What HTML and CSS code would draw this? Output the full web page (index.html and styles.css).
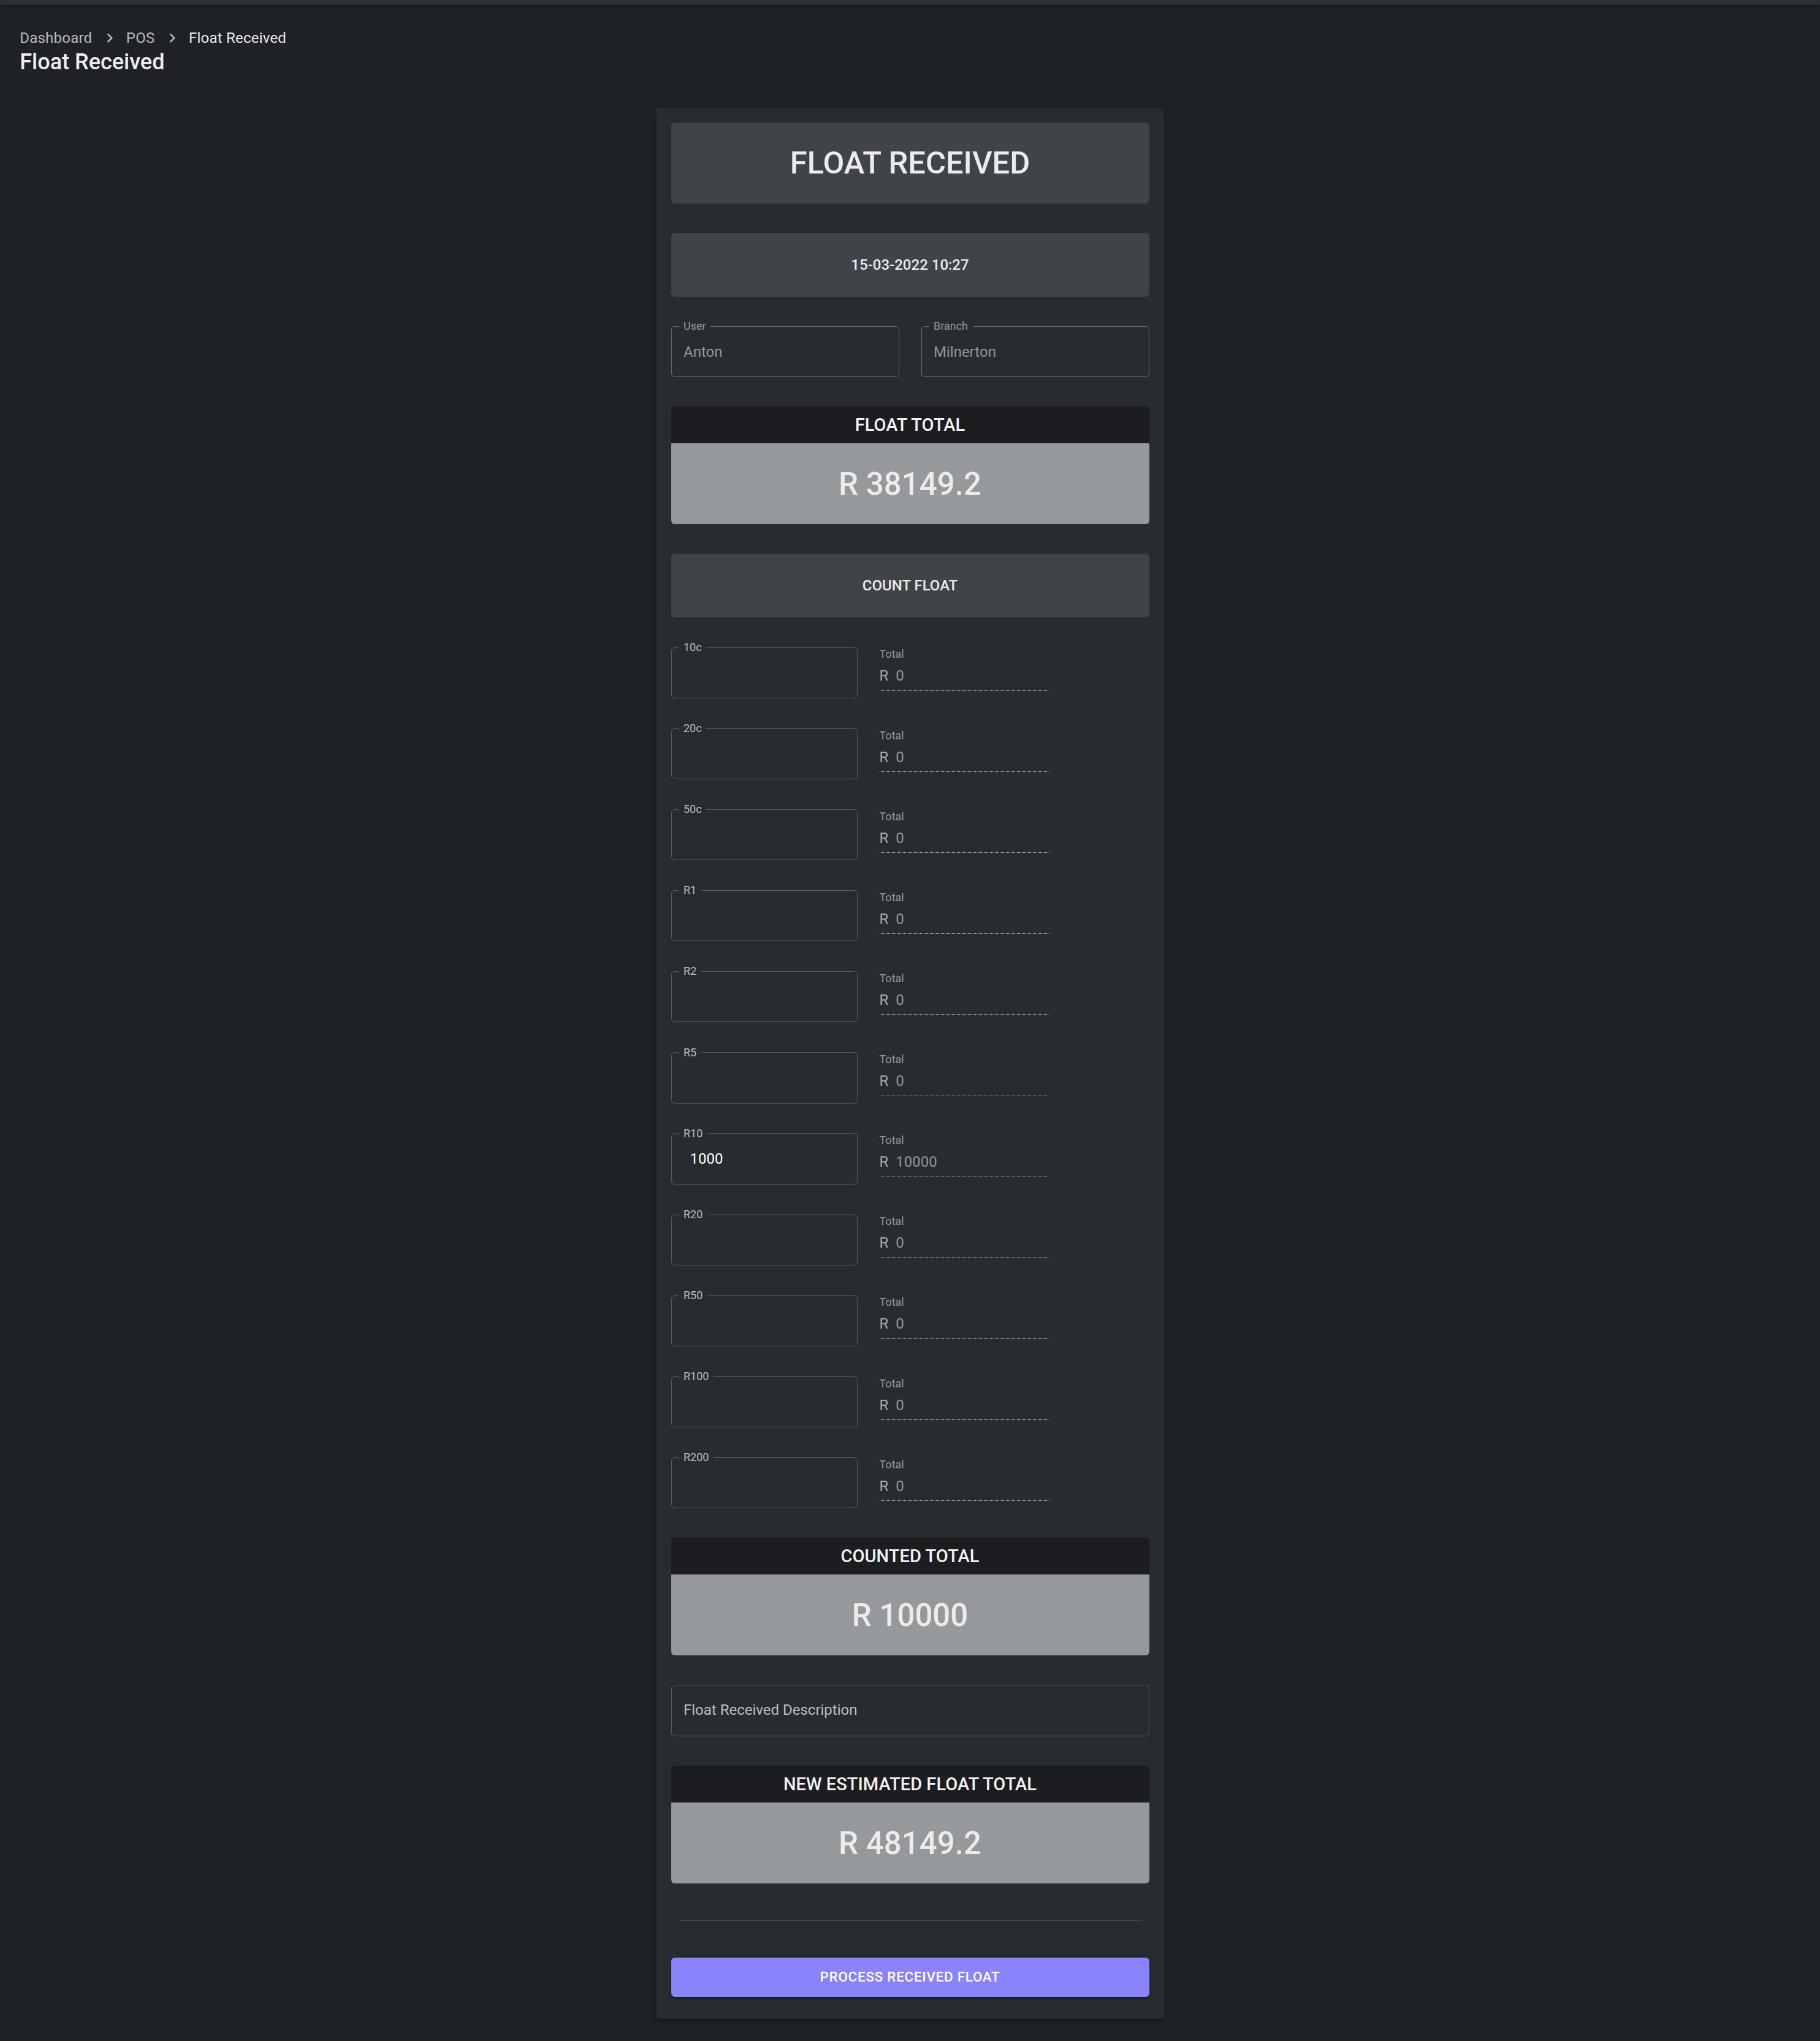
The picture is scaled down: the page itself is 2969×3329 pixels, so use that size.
FILE: index.html
```html
<!DOCTYPE html>
<html lang="en">
<head>
<meta charset="utf-8">
<title>Float Received</title>
<link rel="stylesheet" href="styles.css">
</head>
<body>
<div class="topbar"></div>
<header class="page-head">
  <nav class="crumbs">
    <span class="crumb">Dashboard</span>
    <svg class="sep" viewBox="0 0 24 24"><path d="M10 6 8.59 7.41 13.17 12l-4.58 4.59L10 18l6-6z"/></svg>
    <span class="crumb">POS</span>
    <svg class="sep" viewBox="0 0 24 24"><path d="M10 6 8.59 7.41 13.17 12l-4.58 4.59L10 18l6-6z"/></svg>
    <span class="crumb current">Float Received</span>
  </nav>
  <h1 class="page-title">Float Received</h1>
</header>

<main class="card">
  <div class="banner banner-title">FLOAT RECEIVED</div>
  <div class="banner banner-small">15-03-2022 10:27</div>

  <div class="pair">
    <fieldset class="outlined disabled"><legend>User</legend><div class="value">Anton</div></fieldset>
    <fieldset class="outlined disabled"><legend>Branch</legend><div class="value">Milnerton</div></fieldset>
  </div>

  <section class="total-box">
    <div class="total-head">FLOAT TOTAL</div>
    <div class="total-value">R 38149.2</div>
  </section>

  <div class="banner banner-small">COUNT FLOAT</div>

  <div class="denoms">
    <div class="denom">
      <fieldset class="outlined"><legend>10c</legend><div class="value num"></div></fieldset>
      <div class="std"><div class="std-label">Total</div><div class="std-input"><span class="adorn">R</span><span class="std-val">0</span></div></div>
    </div>
    <div class="denom">
      <fieldset class="outlined"><legend>20c</legend><div class="value num"></div></fieldset>
      <div class="std"><div class="std-label">Total</div><div class="std-input"><span class="adorn">R</span><span class="std-val">0</span></div></div>
    </div>
    <div class="denom">
      <fieldset class="outlined"><legend>50c</legend><div class="value num"></div></fieldset>
      <div class="std"><div class="std-label">Total</div><div class="std-input"><span class="adorn">R</span><span class="std-val">0</span></div></div>
    </div>
    <div class="denom">
      <fieldset class="outlined"><legend>R1</legend><div class="value num"></div></fieldset>
      <div class="std"><div class="std-label">Total</div><div class="std-input"><span class="adorn">R</span><span class="std-val">0</span></div></div>
    </div>
    <div class="denom">
      <fieldset class="outlined"><legend>R2</legend><div class="value num"></div></fieldset>
      <div class="std"><div class="std-label">Total</div><div class="std-input"><span class="adorn">R</span><span class="std-val">0</span></div></div>
    </div>
    <div class="denom">
      <fieldset class="outlined"><legend>R5</legend><div class="value num"></div></fieldset>
      <div class="std"><div class="std-label">Total</div><div class="std-input"><span class="adorn">R</span><span class="std-val">0</span></div></div>
    </div>
    <div class="denom">
      <fieldset class="outlined"><legend>R10</legend><div class="value num">1000</div></fieldset>
      <div class="std"><div class="std-label">Total</div><div class="std-input"><span class="adorn">R</span><span class="std-val">10000</span></div></div>
    </div>
    <div class="denom">
      <fieldset class="outlined"><legend>R20</legend><div class="value num"></div></fieldset>
      <div class="std"><div class="std-label">Total</div><div class="std-input"><span class="adorn">R</span><span class="std-val">0</span></div></div>
    </div>
    <div class="denom">
      <fieldset class="outlined"><legend>R50</legend><div class="value num"></div></fieldset>
      <div class="std"><div class="std-label">Total</div><div class="std-input"><span class="adorn">R</span><span class="std-val">0</span></div></div>
    </div>
    <div class="denom">
      <fieldset class="outlined"><legend>R100</legend><div class="value num"></div></fieldset>
      <div class="std"><div class="std-label">Total</div><div class="std-input"><span class="adorn">R</span><span class="std-val">0</span></div></div>
    </div>
    <div class="denom">
      <fieldset class="outlined"><legend>R200</legend><div class="value num"></div></fieldset>
      <div class="std"><div class="std-label">Total</div><div class="std-input"><span class="adorn">R</span><span class="std-val">0</span></div></div>
    </div>
  </div>

  <section class="total-box">
    <div class="total-head">COUNTED TOTAL</div>
    <div class="total-value">R 10000</div>
  </section>

  <div class="desc">Float Received Description</div>

  <section class="total-box">
    <div class="total-head">NEW ESTIMATED FLOAT TOTAL</div>
    <div class="total-value">R 48149.2</div>
  </section>

  <hr class="divider">

  <button class="process" type="button">Process Received Float</button>
</main>
</body>
</html>
```

FILE: styles.css
```css
html {
  zoom: 1.5;
  background: #1e2226;
}

body {
  margin: 0;
  font-family: Roboto, "Noto Sans", "Liberation Sans", sans-serif;
  color: #fff;
  background: #1e2226;
}

.topbar {
  height: 5.33px;
  background: #2a3035;
  box-shadow: 0 1px 3px rgba(0, 0, 0, 0.45);
}

.page-head {
  padding: 24px 21.5px 0;
}

.crumbs {
  display: flex;
  align-items: center;
  font-size: 16px;
  line-height: 24px;
  letter-spacing: 0.15px;
  color: rgba(255, 255, 255, 0.7);
}

.sep {
  width: 20px;
  height: 20px;
  margin: 0 8px 0 9px;
  fill: rgba(255, 255, 255, 0.7);
}

.current {
  color: #ebebeb;
}

.page-title {
  margin: 0;
  font-size: 24px;
  font-weight: 500;
  line-height: 28px;
  color: #eeeeee;
}

.card {
  width: 552px;
  box-sizing: border-box;
  margin: 36px auto 24px;
  padding: 16px 16px 24px;
  background: #272c31;
  border-radius: 4px;
  box-shadow: 0 2px 4px rgba(0, 0, 0, 0.35);
  display: flex;
  flex-direction: column;
  gap: 32px;
}

.banner {
  background: #3f4449;
  border-radius: 4px;
  display: flex;
  align-items: center;
  justify-content: center;
  color: #ececee;
  font-weight: 500;
}

.banner-title {
  height: 88px;
  font-size: 33.75px;
}

.banner-small {
  height: 69.33px;
  font-size: 16px;
}

.pair {
  display: grid;
  grid-template-columns: 1fr 1fr;
  column-gap: 24px;
}

.outlined {
  margin: -5px 0 0;
  padding: 0 8px;
  border: 1px solid rgba(255, 255, 255, 0.23);
  border-radius: 4px;
  min-width: 0;
}

.outlined legend {
  padding: 0 5px;
  font-size: 12px;
  line-height: 11px;
  color: rgba(255, 255, 255, 0.7);
}

.outlined .value {
  height: 23px;
  padding: 10.5px 5px 15.5px;
  font-size: 16px;
  line-height: 23px;
  color: #ffffff;
}

.outlined .value.num {
  padding-left: 12px;
}

.outlined.disabled {
  border-color: rgba(255, 255, 255, 0.3);
}

.outlined.disabled legend,
.outlined.disabled .value {
  color: rgba(255, 255, 255, 0.5);
}

.denoms {
  display: flex;
  flex-direction: column;
  gap: 32.42px;
}

.denom {
  display: grid;
  grid-template-columns: 202.67px 184.67px;
  column-gap: 24px;
  align-items: start;
}

.std-label {
  height: 16px;
  font-size: 12px;
  line-height: 16px;
  color: rgba(255, 255, 255, 0.5);
}

.std-input {
  display: flex;
  padding: 4px 0 4px;
  font-size: 16px;
  line-height: 23px;
  border-bottom: 1px dotted rgba(255, 255, 255, 0.7);
}

.adorn {
  margin-right: 8px;
  color: rgba(255, 255, 255, 0.6);
}

.std-val {
  color: rgba(255, 255, 255, 0.5);
}

.total-box {
  border-radius: 4px;
  overflow: hidden;
}

.total-head {
  height: 40px;
  background: #1b1d21;
  display: flex;
  align-items: center;
  justify-content: center;
  font-size: 19.4px;
  font-weight: 500;
  color: #f2f2f2;
}

.total-value {
  height: 88px;
  background: #96999c;
  display: flex;
  align-items: center;
  justify-content: center;
  font-size: 34px;
  font-weight: 500;
  color: #ececee;
}

.desc {
  height: 56px;
  box-sizing: border-box;
  border: 1px solid rgba(255, 255, 255, 0.23);
  border-radius: 4px;
  padding: 15.5px 13px;
  font-size: 16px;
  line-height: 23px;
  color: rgba(255, 255, 255, 0.7);
}

.divider {
  margin: 8px 8px;
  height: 0;
  border: 0;
  border-top: 1px solid rgba(255, 255, 255, 0.12);
}

.process {
  height: 42.25px;
  border: 0;
  border-radius: 4px;
  background: #8a84fc;
  color: #ffffff;
  font-family: Roboto, "Noto Sans", sans-serif;
  font-size: 15px;
  font-weight: 500;
  line-height: 26px;
  letter-spacing: 0.46px;
  text-transform: uppercase;
  box-shadow: 0 3px 1px -2px rgba(0, 0, 0, 0.2), 0 2px 2px 0 rgba(0, 0, 0, 0.14), 0 1px 5px 0 rgba(0, 0, 0, 0.12);
}
```
